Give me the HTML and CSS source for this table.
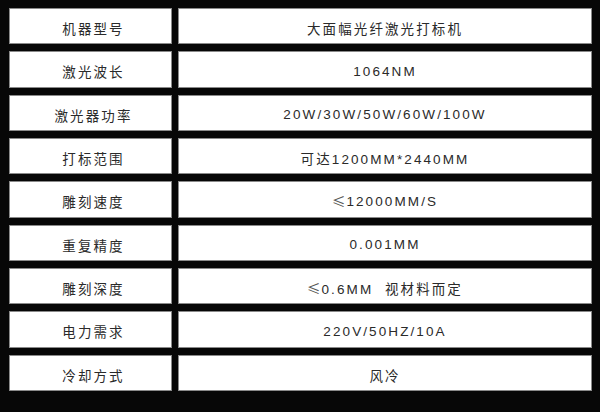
FILE: index.html
```html
<!DOCTYPE html>
<html lang="zh">
<head>
<meta charset="utf-8">
<link rel="stylesheet" href="styles.css">
</head>
<body>
<div class="spec">
  <div class="cell key">机器型号</div><div class="cell val">大面幅光纤激光打标机</div>
  <div class="cell key">激光波长</div><div class="cell val">1064NM</div>
  <div class="cell key">激光器功率</div><div class="cell val">20W/30W/50W/60W/100W</div>
  <div class="cell key">打标范围</div><div class="cell val">可达1200MM*2440MM</div>
  <div class="cell key">雕刻速度</div><div class="cell val"><span class="sym">≤</span>12000MM/S</div>
  <div class="cell key">重复精度</div><div class="cell val">0.001MM</div>
  <div class="cell key">雕刻深度</div><div class="cell val"><span class="sym">≤</span>0.6MM&nbsp;&nbsp;视材料而定</div>
  <div class="cell key">电力需求</div><div class="cell val">220V/50HZ/10A</div>
  <div class="cell key">冷却方式</div><div class="cell val">风冷</div>
</div>
</body>
</html>
```
FILE: styles.css
```css
html, body {
  margin: 0;
  padding: 0;
  background: #070707;
}
body {
  width: 600px;
  height: 412px;
  overflow: hidden;
}
.spec {
  display: grid;
  grid-template-columns: 163px 414px;
  grid-auto-rows: 36.33px;
  column-gap: 6px;
  row-gap: 7px;
  padding: 8px 0 0 9px;
}
.cell {
  box-sizing: border-box;
  background: #ffffff;
  border: 1px solid #8a8a8a;
  display: flex;
  align-items: center;
  justify-content: center;
  padding-top: 4px;
  font-family: "Liberation Sans", "Noto Sans CJK SC", sans-serif;
  font-size: 13.5px;
  letter-spacing: 2.1px;
  color: #2a2a2a;
}
.key {
  padding-left: 6px;
}
.sym {
  font-family: "Noto Sans CJK SC", sans-serif;
  color: #555;
  letter-spacing: 1px;
}
```
